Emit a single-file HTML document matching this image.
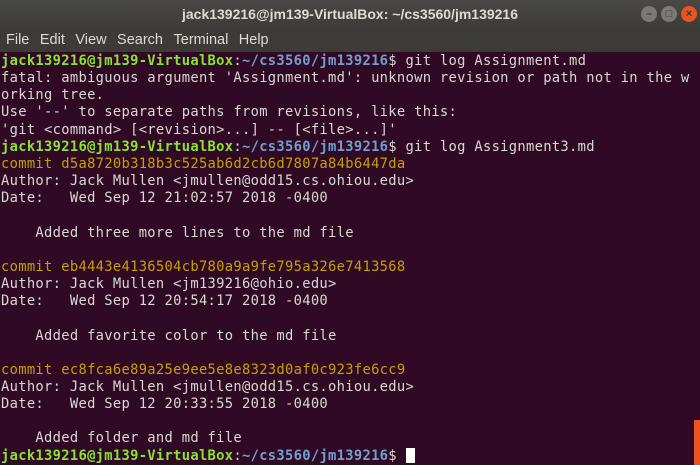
<!DOCTYPE html><html><head><style>
body{margin:0;width:700px;height:465px;overflow:hidden;background:#300a24;font-family:"Liberation Sans",sans-serif}
#t{height:28px;background:linear-gradient(#4a4945,#3c3b37);color:#dfdbd2;font-weight:bold;font-size:14px;text-align:center;line-height:28px;position:relative}
#m{height:24px;background:#3c3b37;color:#dfdbd2;font-size:14.5px;line-height:24px;padding-left:6px}
#m span{margin-right:10.5px}
.b{position:absolute;top:6px;width:16px;height:16px;border-radius:50%;background:#7a7975;font-size:11px;line-height:16px;color:#3c3b37;text-align:center;font-weight:bold}
pre{margin:0;padding:1px 0 0 1px;font-family:"DejaVu Sans Mono",monospace;font-size:13.8px;letter-spacing:0.3px;line-height:17.15px;color:#d8d8d2;white-space:pre}
.g{color:#8ae234;font-weight:bold}.u{color:#729fcf;font-weight:bold}.y{color:#c4a000}
.c{display:inline-block;width:9px;height:15px;background:#fff;vertical-align:-3px}
#s{position:absolute;right:0;top:420px;width:6px;height:45px;background:#e95420}
</style></head><body>
<div id="t">jack139216@jm139-VirtualBox: ~/cs3560/jm139216
<div class="b" style="left:641px">–</div><div class="b" style="left:661px">□</div><div class="b" style="left:681px;background:#e95420;color:#3c3b37">×</div></div>
<div id="m"><span>File</span><span>Edit</span><span>View</span><span>Search</span><span>Terminal</span><span>Help</span></div>
<pre><span class="g">jack139216@jm139-VirtualBox</span>:<span class="u">~/cs3560/jm139216</span>$ git log Assignment.md
fatal: ambiguous argument 'Assignment.md': unknown revision or path not in the w
orking tree.
Use '--' to separate paths from revisions, like this:
'git &lt;command&gt; [&lt;revision&gt;...] -- [&lt;file&gt;...]'
<span class="g">jack139216@jm139-VirtualBox</span>:<span class="u">~/cs3560/jm139216</span>$ git log Assignment3.md
<span class="y">commit d5a8720b318b3c525ab6d2cb6d7807a84b6447da</span>
Author: Jack Mullen &lt;jmullen@odd15.cs.ohiou.edu&gt;
Date:   Wed Sep 12 21:02:57 2018 -0400

    Added three more lines to the md file

<span class="y">commit eb4443e4136504cb780a9a9fe795a326e7413568</span>
Author: Jack Mullen &lt;jm139216@ohio.edu&gt;
Date:   Wed Sep 12 20:54:17 2018 -0400

    Added favorite color to the md file

<span class="y">commit ec8fca6e89a25e9ee5e8e8323d0af0c923fe6cc9</span>
Author: Jack Mullen &lt;jmullen@odd15.cs.ohiou.edu&gt;
Date:   Wed Sep 12 20:33:55 2018 -0400

    Added folder and md file
<span class="g">jack139216@jm139-VirtualBox</span>:<span class="u">~/cs3560/jm139216</span>$ <span class="c"></span></pre>
<div id="s"></div>
</body></html>
